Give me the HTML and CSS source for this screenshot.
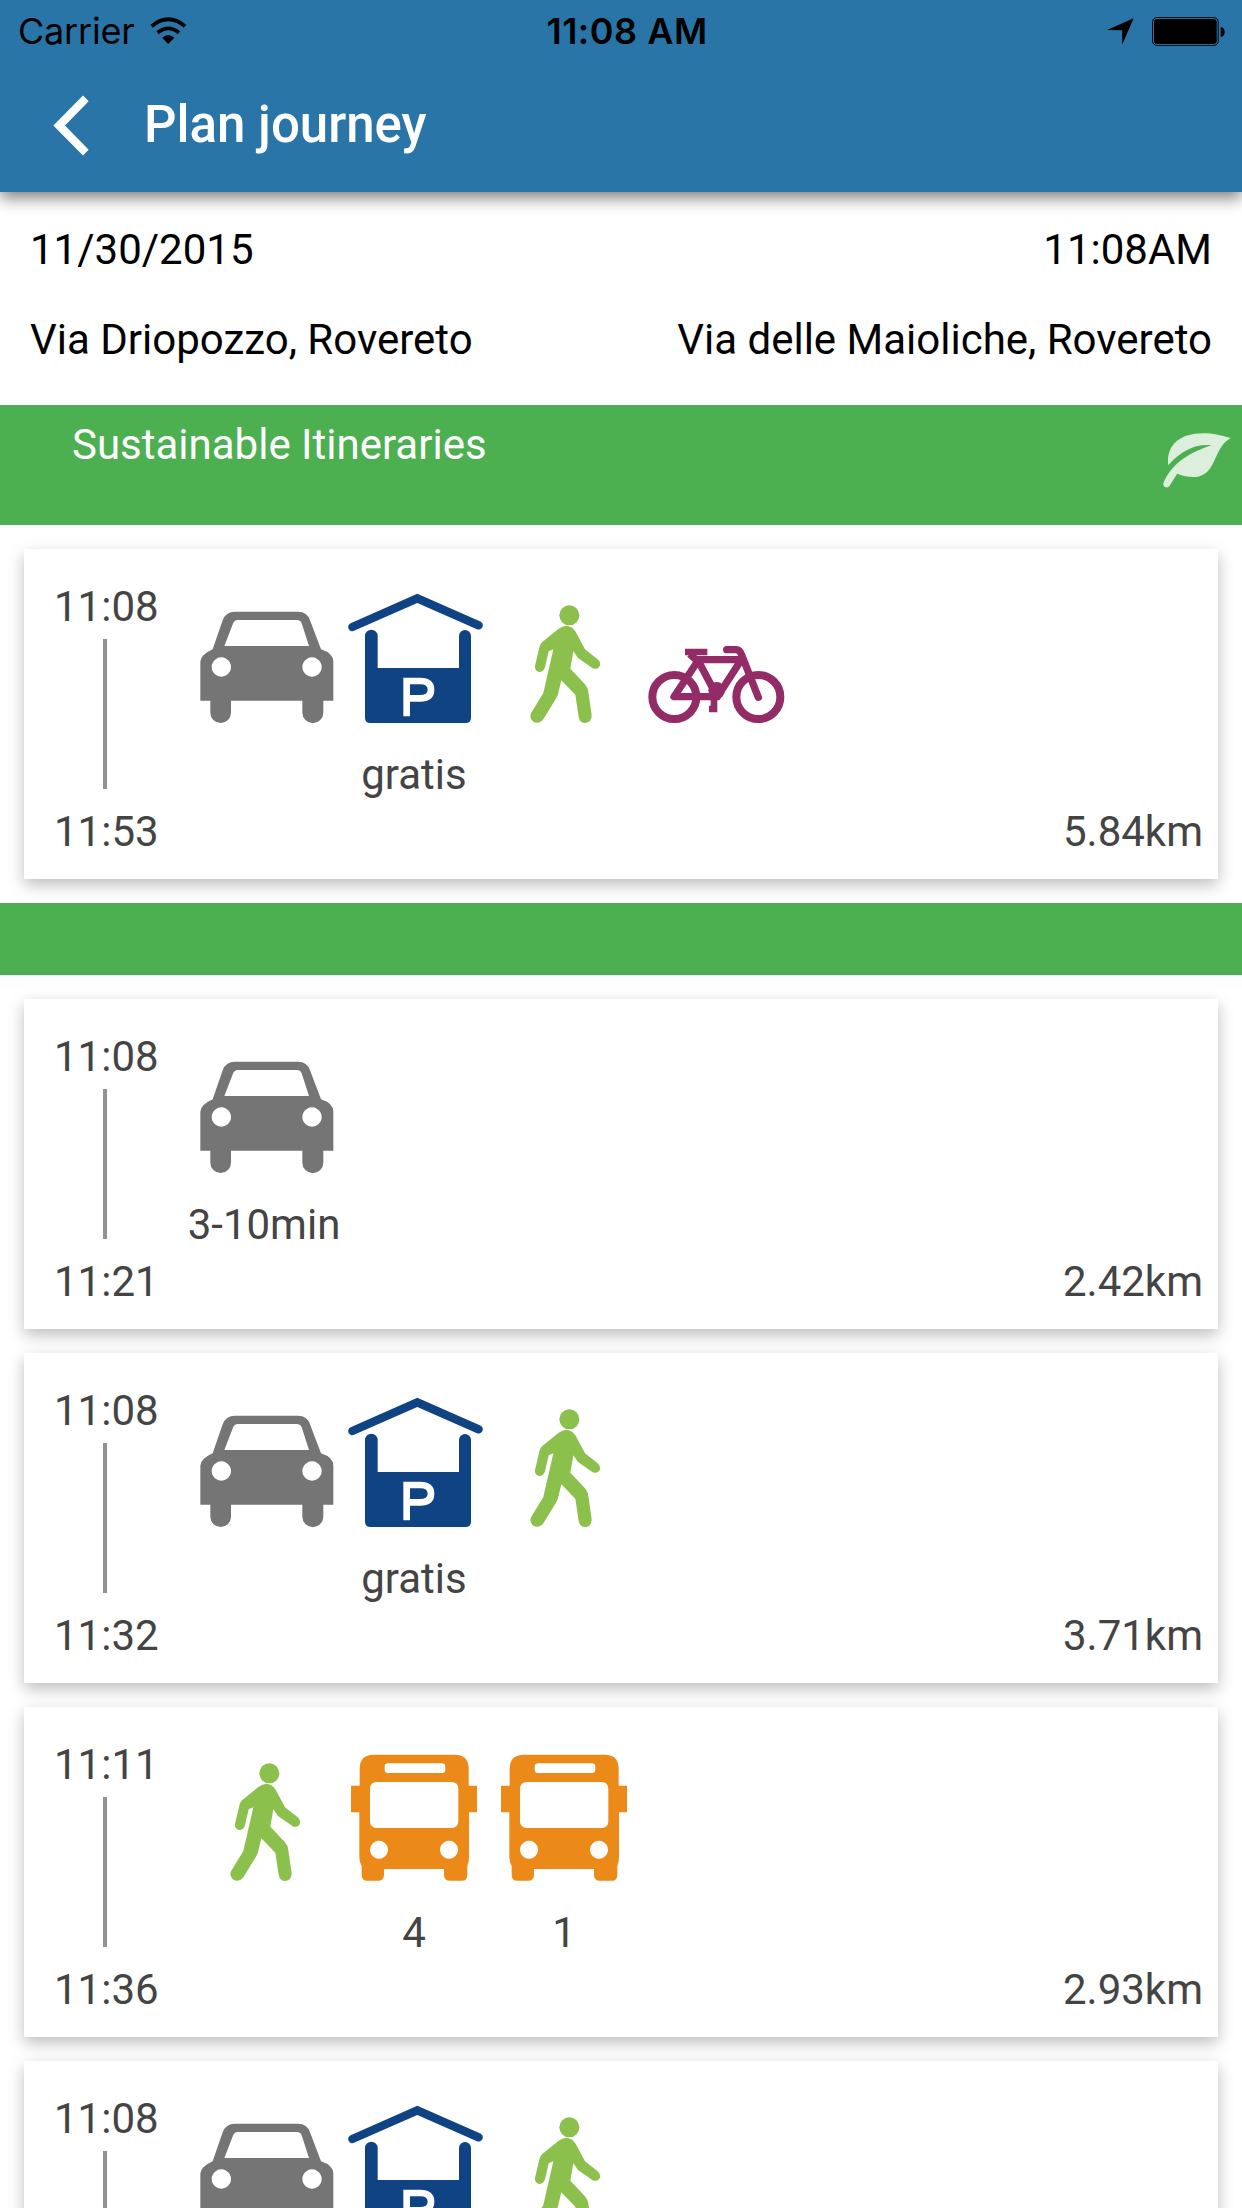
FILE: index.html
```html
<!DOCTYPE html>
<html lang="en">
<head>
<meta charset="utf-8">
<title>Plan journey</title>
<link rel="stylesheet" href="styles.css">
</head>
<body>
<svg class="defs" aria-hidden="true">
  <symbol id="car" viewBox="27 27 450 450">
    <path fill="#757575" fill-rule="evenodd" d="M98 238 L128 151 Q137 125 165 125 H354 Q382 125 390 151 L423 238 Q460 250 460 275 V392 H430 V428 A31 31 0 0 1 367 428 V392 H153 V428 A31 31 0 0 1 91 428 V392 H61 V275 Q61 255 98 238 Z M133 228 H387 L365 160 Q361 150 350 150 H172 Q164 150 160 158 Z M124 262 a29 29 0 1 0 .1 0 Z M396 262 a29 29 0 1 0 .1 0 Z"/>
  </symbol>
  <symbol id="parking" viewBox="477 27 450 450">
    <path fill="none" stroke="#104383" stroke-width="25" stroke-linecap="round" d="M517 171 L712 85 L896 166"/>
    <path fill="#104383" d="M555 198 A19 19 0 0 1 593 198 V294 H837 V198 A18 18 0 0 1 873 198 V443 Q873 459 857 459 H571 Q555 459 555 443 Z"/>
    <path fill="none" stroke="#fff" stroke-width="20" d="M680 439 V333 H720 Q753 333 753 359 Q753 385 720 385 H680"/>
  </symbol>
  <symbol id="walk" viewBox="-63 -3 450 450">
    <circle cx="178" cy="106" r="30" fill="#8bc04d"/>
    <path fill="#8bc04d" d="M170 137 Q187 139 197 155 L225 208 L263 238 Q274 247 269 259 Q261 271 247 264 L204 234 L190 214 L181 266 L225 313 Q233 322 235 335 L245 406 Q245 428 226 429 Q209 429 206 411 L196 344 L154 301 L144 343 Q141 352 135 361 L99 419 Q87 433 70 425 Q57 415 63 400 L100 339 L130 208 L116 214 L105 262 Q101 276 87 276 Q73 272 75 258 L89 199 Q91 192 97 186 L145 147 Q157 138 170 137 Z"/>
  </symbol>
  <symbol id="bike" viewBox="387 -3 450 450">
    <g fill="none" stroke="#932b67" stroke-width="24" stroke-linejoin="round">
      <circle cx="493" cy="351" r="66"/>
      <circle cx="745" cy="351" r="66"/>
      <path d="M566 239 L492 350 H622 L563 239 H694 L622 350 M539 222 L565 245" stroke-width="22"/>
      <path d="M650 209 H678 Q690 209 695 225 L745 352" stroke-linecap="round" stroke-width="22"/>
      <path d="M525 216 H592 M612 350 V387 M597 387 H622" stroke-width="20"/>
    </g>
    <circle cx="620" cy="331" r="25" fill="#932b67"/>
  </symbol>
  <symbol id="bus" viewBox="-3 -9 450 450">
    <path fill="#eb8a18" fill-rule="evenodd" d="M59 87 Q59 44 101 44 H345 Q386 44 386 87 V137 H411 V217 H387 V350 Q387 365 382 378 V404 Q382 422 366 422 H330 Q312 422 312 404 V387 H132 V404 Q132 422 114 422 H82 Q65 422 65 404 V378 Q58 365 58 350 V217 H33 V137 H59 Z M145 70 Q134 70 134 80 V89 Q134 99 145 99 H304 Q316 99 316 89 V80 Q316 70 304 70 Z M111 126 Q90 126 90 147 V243 Q90 264 111 264 H334 Q355 264 355 243 V147 Q355 126 334 126 Z M117 302 a27 27 0 1 0 .1 0 Z M327 302 a27 27 0 1 0 .1 0 Z"/>
  </symbol>
</svg>

<header class="header">
  <div class="status">
    <div class="status-left">
      <span class="carrier">Carrier</span>
      <svg class="wifi" viewBox="450 45 112 86">
        <path fill="none" stroke="#000" stroke-width="11.5" d="M455 75 Q505 33 556 75 M473 95 Q505 68 538 95"/>
        <path d="M487 110 Q505 94 524 110 L505 129 Z"/>
      </svg>
    </div>
    <span class="clock">11:08 AM</span>
    <div class="status-right">
      <svg class="location" viewBox="141 53 82 81"><path d="M222 53 L187 134 V90 L141 89 Z"/></svg>
      <svg class="battery" viewBox="276 48 220 87">
        <rect x="277.5" y="49.5" width="198" height="84" rx="13" fill="none" stroke="#000" stroke-width="3"/>
        <rect x="282" y="54" width="189" height="75" rx="9"/>
        <path d="M483 78 Q495 80 495 93 Q495 106 483 108 Z"/>
      </svg>
    </div>
  </div>
  <div class="toolbar">
    <svg class="back" viewBox="160 284 108 182"><path fill="#fff" d="M250 285 L267 302 L196 375 L267 448 L250 465 L161 375 Z"/></svg>
    <h1 class="title">Plan journey</h1>
  </div>
</header>

<section class="summary">
  <div class="summary-row"><span>11/30/2015</span><span>11:08AM</span></div>
  <div class="summary-row"><span>Via Driopozzo, Rovereto</span><span>Via delle Maioliche, Rovereto</span></div>
</section>

<div class="band band-title">
  <span>Sustainable Itineraries</span>
  <svg class="leaf" viewBox="189 100 204 166">
    <path fill="#dbefdc" d="M204 197 C198 140 235 101 310 101 C340 101 360 107 393 115 C360 133 354 165 336 198 C315 236 280 241 231 223 L208 260 Q202 267 194 263 Q186 258 191 248 C213 200 250 166 334 137 C285 132 244 154 204 197 Z"/>
  </svg>
</div>

<div class="list">
  <article class="card">
    <div class="times"><span>11:08</span><i class="line"></i><span>11:53</span></div>
    <div class="legs">
      <div class="leg"><svg><use href="#car"/></svg></div>
      <div class="leg"><svg><use href="#parking"/></svg><span>gratis</span></div>
      <div class="leg"><svg><use href="#walk"/></svg></div>
      <div class="leg"><svg><use href="#bike"/></svg></div>
    </div>
    <span class="distance">5.84km</span>
  </article>
</div>

<div class="band"></div>

<div class="list list-rest">
  <article class="card">
    <div class="times"><span>11:08</span><i class="line"></i><span>11:21</span></div>
    <div class="legs">
      <div class="leg"><svg><use href="#car"/></svg><span>3-10min</span></div>
    </div>
    <span class="distance">2.42km</span>
  </article>
  <article class="card">
    <div class="times"><span>11:08</span><i class="line"></i><span>11:32</span></div>
    <div class="legs">
      <div class="leg"><svg><use href="#car"/></svg></div>
      <div class="leg"><svg><use href="#parking"/></svg><span>gratis</span></div>
      <div class="leg"><svg><use href="#walk"/></svg></div>
    </div>
    <span class="distance">3.71km</span>
  </article>
  <article class="card">
    <div class="times"><span>11:11</span><i class="line"></i><span>11:36</span></div>
    <div class="legs">
      <div class="leg"><svg><use href="#walk"/></svg></div>
      <div class="leg"><svg><use href="#bus"/></svg><span>4</span></div>
      <div class="leg"><svg><use href="#bus"/></svg><span>1</span></div>
    </div>
    <span class="distance">2.93km</span>
  </article>
  <article class="card">
    <div class="times"><span>11:08</span><i class="line"></i></div>
    <div class="legs">
      <div class="leg"><svg><use href="#car"/></svg></div>
      <div class="leg"><svg><use href="#parking"/></svg></div>
      <div class="leg"><svg><use href="#walk"/></svg></div>
    </div>
  </article>
</div>
</body>
</html>
```
FILE: styles.css
```css
* { box-sizing: border-box; }
body {
  display: flex;
  flex-direction: column;
  margin: 0;
  height: 2208px;
  overflow: hidden;
  background: #fff;
  color: #000;
  font-family: Roboto, sans-serif;
  font-size: 42px;
  line-height: 60px;
}
svg { display: block; }
.defs { display: none; }

.header {
  position: relative;
  flex: none;
  height: 192px;
  background: #2975a8;
  box-shadow: 0 6px 15px rgba(0, 0, 0, 0.5);
}
.status {
  display: grid;
  grid-template-columns: 1fr auto 1fr;
  height: 60px;
  padding: 0 17px 0 18px;
  align-items: center;
  font-family: Inter, sans-serif;
  font-size: 36px;
}
.status-left { display: flex; align-items: center; gap: 15px; }
.carrier { width: 117px; margin-top: 1px; letter-spacing: -0.2px; white-space: nowrap; }
.wifi { width: 37px; height: 29px; margin-top: -1px; }
.clock { padding: 1px 0 0 11px; font-weight: 600; letter-spacing: 0.5px; }
.status-right { display: flex; align-items: center; justify-content: flex-end; gap: 18px; }
.location { width: 27px; height: 27px; margin-top: 2px; }
.battery { width: 73px; height: 29px; margin-top: 1px; }
.toolbar { display: flex; align-items: center; height: 130px; padding-left: 53px; }
.back { width: 36px; height: 61px; }
.title {
  margin: -1px 0 0 55px;
  color: #fff;
  font-size: 51px;
  font-weight: 500;
}

.summary {
  display: flex;
  flex: none;
  flex-direction: column;
  gap: 30px;
  height: 213px;
  padding: 28px 30px 0;
}
.summary-row { display: flex; justify-content: space-between; height: 60px; }

.band { flex: none; height: 72px; background: #4caf50; }
.band-title {
  display: flex;
  justify-content: space-between;
  height: 120px;
  padding: 10px 11px 0 72px;
  color: #fff;
}
.leaf { width: 68px; height: 55px; margin-top: 18px; }

.list { display: flex; flex: none; flex-direction: column; gap: 24px; padding: 24px; }
.list-rest { flex: 1; min-height: 0; padding-bottom: 0; overflow: hidden; }
.card {
  display: flex;
  flex: none;
  height: 330px;
  padding: 28px 15px 0 30px;
  background: #fff;
  color: #444;
  box-shadow: 0 6px 15px rgba(0, 0, 0, 0.26);
}
.times { width: 106px; display: flex; flex-direction: column; flex: none; }
.line { width: 4px; height: 150px; margin: 2px 0 13px 49px; background: #929292; }
.legs { display: flex; margin: 2px 0 0 29px; flex: 1; }
.leg { width: 150px; display: flex; flex-direction: column; align-items: center; }
.leg svg { width: 150px; height: 150px; }
.leg span { margin-top: 16px; white-space: nowrap; }
.distance { margin-top: 225px; }
```
